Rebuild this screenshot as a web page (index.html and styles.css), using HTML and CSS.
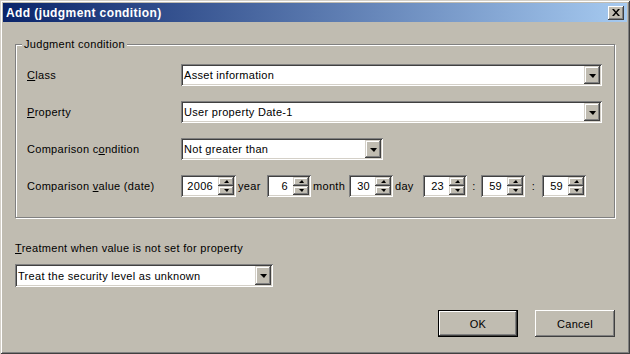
FILE: index.html
```html
<!DOCTYPE html>
<html lang="en">

<head>
    <meta charset="UTF-8">
    <title>Add (judgment condition)</title>
    <link rel="stylesheet" href="styles.css">
</head>

<body>
    <div class="window">
        <div class="titlebar">
            <span class="title">Add (judgment condition)</span>
            <span class="close">
                <svg width="8" height="7" viewBox="0 0 8 7">
                    <path d="M0 0h2l2 2.5L6 0h2L5 3.5 8 7H6L4 4.5 2 7H0l3-3.5z" fill="#000"/>
                </svg>
            </span>
        </div>

        <div class="content">
            <div class="group">
                <span class="group-title">Judgment condition</span>

                <div class="form">
                    <label><u>C</u>lass</label>
                    <div class="combo">
                        <span class="combo-text">Asset information</span>
                        <span class="drop"><i class="arrow"></i></span>
                    </div>

                    <label><u>P</u>roperty</label>
                    <div class="combo">
                        <span class="combo-text">User property Date-1</span>
                        <span class="drop"><i class="arrow"></i></span>
                    </div>

                    <label>Comparison c<u>o</u>ndition</label>
                    <div class="combo combo-short">
                        <span class="combo-text">Not greater than</span>
                        <span class="drop"><i class="arrow"></i></span>
                    </div>

                    <label>Comparison <u>v</u>alue (date)</label>
                    <div class="date-row">
                        <div class="spin spin-year">
                            <span class="val">2006</span>
                            <span class="arrows"><span><i class="up"></i></span><span><i class="down"></i></span></span>
                        </div>
                        <span class="unit unit-year">year</span>
                        <div class="spin">
                            <span class="val">6</span>
                            <span class="arrows"><span><i class="up"></i></span><span><i class="down"></i></span></span>
                        </div>
                        <span class="unit unit-month">month</span>
                        <div class="spin">
                            <span class="val">30</span>
                            <span class="arrows"><span><i class="up"></i></span><span><i class="down"></i></span></span>
                        </div>
                        <span class="unit unit-day">day</span>
                        <div class="spin">
                            <span class="val">23</span>
                            <span class="arrows"><span><i class="up"></i></span><span><i class="down"></i></span></span>
                        </div>
                        <span class="unit colon">:</span>
                        <div class="spin">
                            <span class="val">59</span>
                            <span class="arrows"><span><i class="up"></i></span><span><i class="down"></i></span></span>
                        </div>
                        <span class="unit colon colon-wide">:</span>
                        <div class="spin">
                            <span class="val">59</span>
                            <span class="arrows"><span><i class="up"></i></span><span><i class="down"></i></span></span>
                        </div>
                    </div>
                </div>
            </div>

            <div class="treat">
                <div class="treat-label"><u>T</u>reatment when value is not set for property</div>
                <div class="combo combo-treat">
                    <span class="combo-text">Treat the security level as unknown</span>
                    <span class="drop"><i class="arrow"></i></span>
                </div>
            </div>

            <div class="actions">
                <button class="btn btn-default">OK</button>
                <button class="btn">Cancel</button>
            </div>
        </div>
    </div>
</body>

</html>
```

FILE: styles.css
```css
* {
    box-sizing: border-box;
    margin: 0;
}

body {
    margin: 0;
    background-color: #c0bcb1;
    font-family: "Liberation Sans", Arial, sans-serif;
    font-size: 11px;
    letter-spacing: 0.3px;
    color: #000;
}

.window {
    width: 630px;
    height: 354px;
    padding: 3px;
    background-color: #c0bcb1;
    box-shadow: inset 1px 1px #d4d0c8, inset -1px -1px #404040, inset 2px 2px #fff, inset -2px -2px #808080;
    display: flex;
    flex-direction: column;
}

/* title bar */
.titlebar {
    height: 19px;
    background: linear-gradient(to right, #0a246a, #a6caf0);
    display: flex;
    align-items: center;
    justify-content: space-between;
    padding: 0 3px 0 3px;
}

.title {
    color: #fff;
    font-weight: bold;
    font-size: 12px;
    letter-spacing: 0.4px;
}

.close {
    width: 16px;
    height: 14px;
    background-color: #c0bcb1;
    box-shadow: inset -1px -1px #404040, inset 1px 1px #fff, inset -2px -2px #808080;
    display: flex;
    align-items: center;
    justify-content: center;
}

.content {
    flex: 1;
    padding: 0 12px;
    display: flex;
    flex-direction: column;
}

/* group box */
.group {
    position: relative;
    margin-top: 22px;
    border: 1px solid #808080;
    box-shadow: inset 1px 1px #fff, 1px 1px #fff;
    padding: 19px 12px 20px 11px;
}

.group-title {
    position: absolute;
    top: -7px;
    left: 6px;
    padding: 0 2px;
    line-height: 13px;
    background-color: #c0bcb1;
}

.form {
    display: grid;
    grid-template-columns: 154px 1fr;
    row-gap: 15px;
    align-items: center;
}

label {
    line-height: 13px;
}

/* combo boxes */
.combo {
    height: 22px;
    background-color: #fff;
    padding: 2px;
    display: flex;
    align-items: center;
    box-shadow: inset 1px 1px #808080, inset -1px -1px #fff, inset 2px 2px #404040, inset -2px -2px #d4d0c8;
}

.combo-short {
    width: 202px;
}

.combo-treat {
    width: 258px;
    height: 23px;
}

.combo-text {
    flex: 1;
    padding-left: 1px;
    white-space: nowrap;
}

.drop {
    width: 16px;
    align-self: stretch;
    background-color: #c0bcb1;
    box-shadow: inset -1px -1px #404040, inset 1px 1px #d4d0c8, inset -2px -2px #808080, inset 2px 2px #fff;
    display: flex;
    align-items: center;
    justify-content: center;
}

.arrow {
    width: 0;
    height: 0;
    margin-top: 1px;
    border-left: 4px solid transparent;
    border-right: 3px solid transparent;
    border-top: 4px solid #000;
}

/* date spinners */
.date-row {
    display: flex;
    align-items: center;
}

.spin {
    width: 44px;
    height: 22px;
    padding: 2px;
    background-color: #fff;
    display: flex;
    box-shadow: inset 1px 1px #808080, inset -1px -1px #fff, inset 2px 2px #404040, inset -2px -2px #d4d0c8;
}

.spin-year {
    width: 55px;
}

.val {
    flex: 1;
    text-align: right;
    padding-right: 5px;
    line-height: 18px;
}

.arrows {
    width: 16px;
    display: flex;
    flex-direction: column;
}

.arrows span {
    flex: 1;
    background-color: #c0bcb1;
    box-shadow: inset -1px -1px #404040, inset 1px 1px #d4d0c8, inset -2px -2px #808080, inset 2px 2px #fff;
    display: flex;
    align-items: center;
    justify-content: center;
}

.up {
    width: 0;
    height: 0;
    border-left: 3px solid transparent;
    border-right: 2px solid transparent;
    border-bottom: 3px solid #000;
}

.down {
    width: 0;
    height: 0;
    border-left: 3px solid transparent;
    border-right: 2px solid transparent;
    border-top: 3px solid #000;
}

.unit {
    padding-left: 2px;
}

.unit-year {
    width: 31px;
}

.unit-month {
    width: 38px;
}

.unit-day {
    width: 30px;
}

.colon {
    width: 14px;
    padding-left: 0;
    text-align: center;
}

.colon-wide {
    width: 17px;
}

/* bottom part */
.treat {
    margin-top: 24px;
}

.treat-label {
    line-height: 13px;
    margin-bottom: 9px;
}

.actions {
    margin-top: 23px;
    display: flex;
    justify-content: flex-end;
    gap: 17px;
}

.btn {
    width: 80px;
    height: 27px;
    font-family: "Liberation Sans", Arial, sans-serif;
    font-size: 11px;
    letter-spacing: 0.3px;
    color: #000;
    border: none;
    background-color: #c0bcb1;
    box-shadow: inset -1px -1px #404040, inset 1px 1px #fff, inset -2px -2px #808080;
}

.btn-default {
    border: 1px solid #000;
}
```
